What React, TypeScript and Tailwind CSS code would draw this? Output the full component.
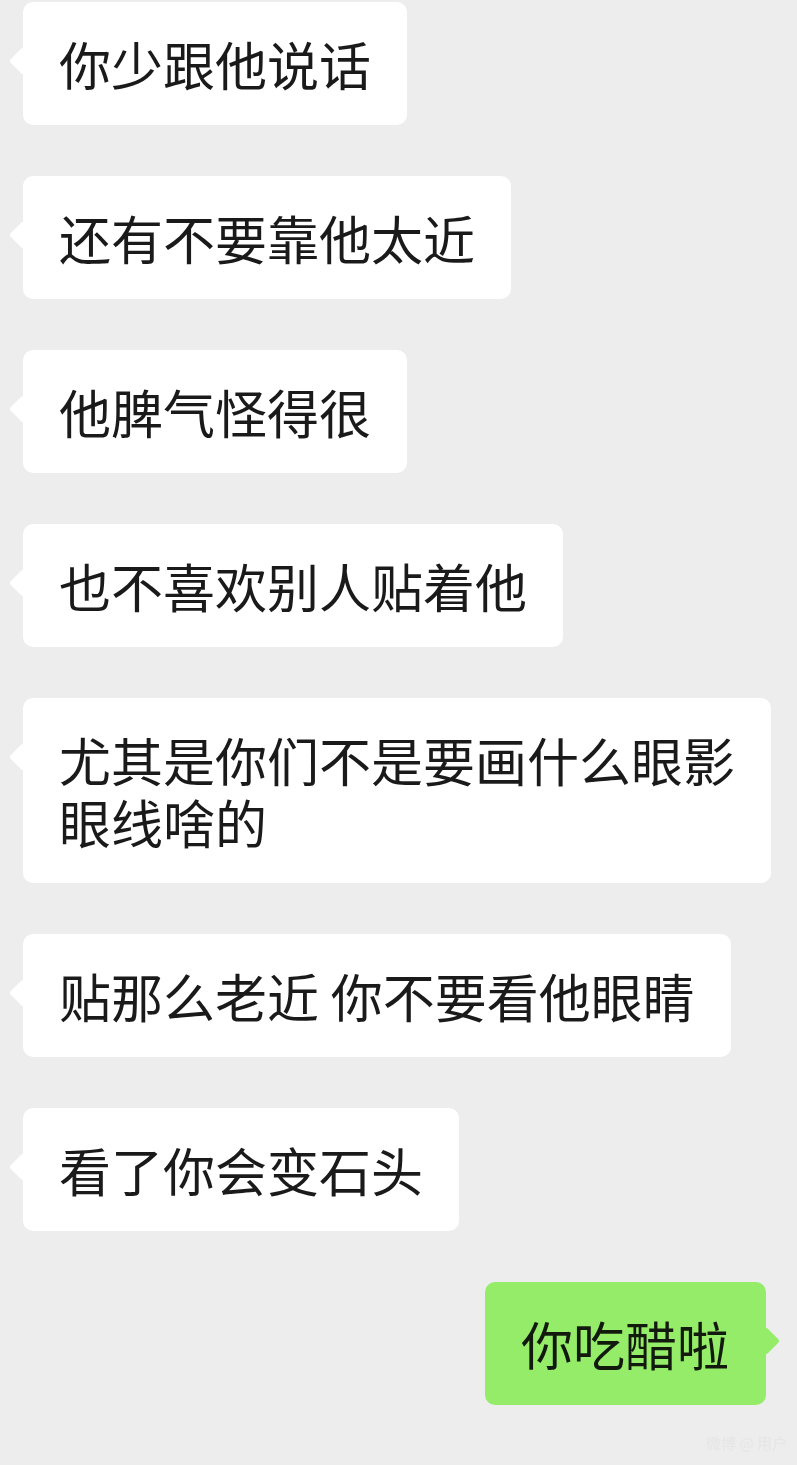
type Msg = { text: string; mine?: boolean };

const messages: Msg[] = [
  { text: "你少跟他说话" },
  { text: "还有不要靠他太近" },
  { text: "他脾气怪得很" },
  { text: "也不喜欢别人贴着他" },
  { text: "尤其是你们不是要画什么眼影\n眼线啥的" },
  { text: "贴那么老近 你不要看他眼睛" },
  { text: "看了你会变石头" },
  { text: "你吃醋啦", mine: true },
];

const Bubble = ({ msg }: { msg: Msg }) => {
  if (msg.mine) {
    return (
      <div className="relative self-end mr-[31px] rounded-[10px] bg-[#95ec69] pl-[36px] pr-[37px] pt-[31px] pb-[30px]">
        <div className="absolute right-[-10px] top-[49px] h-[20px] w-[20px] rotate-45 rounded-[3px] bg-[#95ec69]" />
        <span className="relative whitespace-pre-line text-[52px] leading-[62px] text-[#111a0c]">{msg.text}</span>
      </div>
    );
  }
  return (
    <div className="relative self-start ml-[23px] rounded-[10px] bg-white px-[36px] pt-[31px] pb-[30px]">
      <div className="absolute left-[-10px] top-[49px] h-[20px] w-[20px] rotate-45 rounded-[3px] bg-white" />
      <span className="relative whitespace-pre-line text-[52px] leading-[62px] text-[#1a1a1a]">{msg.text}</span>
    </div>
  );
};

export default function App() {
  return (
    <div
      className="flex min-h-[1465px] w-full flex-col gap-[51px] overflow-hidden bg-[#ededed] pt-[2px]"
      style={{ fontFamily: '"Noto Sans CJK SC", "Noto Sans", sans-serif' }}
    >
      {messages.map((m, i) => (
        <Bubble key={i} msg={m} />
      ))}
      <div className="-mt-[24px] flex justify-end pr-[10px]">
        <span className="text-[15px] text-[#e6e6e6]">微博 @ 用户</span>
      </div>
    </div>
  );
}
